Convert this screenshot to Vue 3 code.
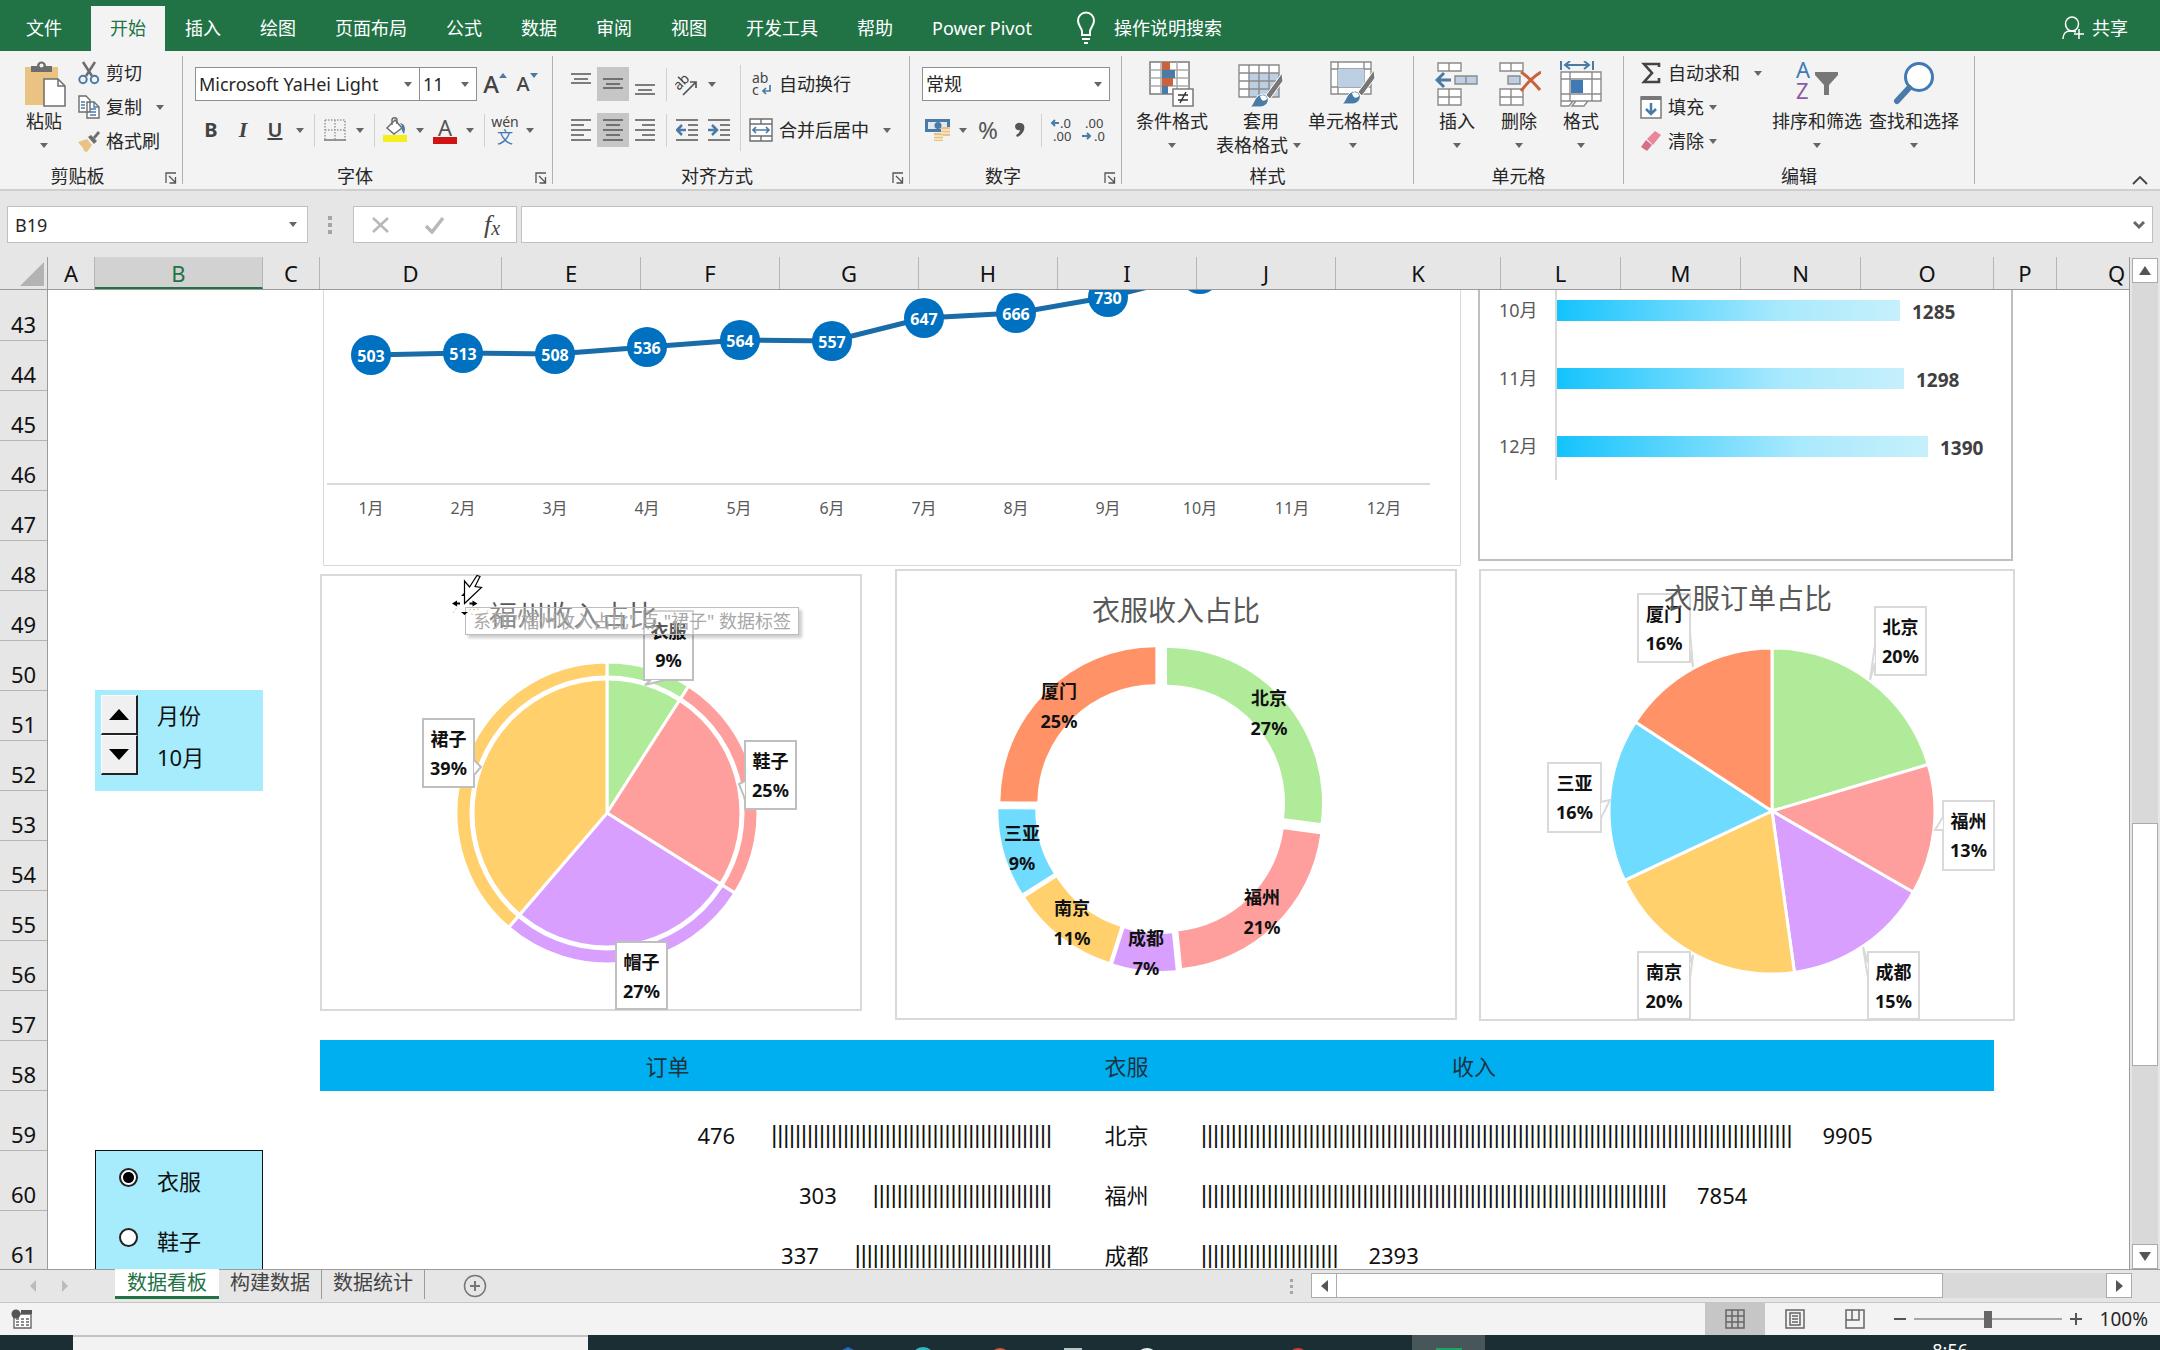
<script setup>
import { ref } from 'vue'

const tabs = ['文件', '开始', '插入', '绘图', '页面布局', '公式', '数据', '审阅', '视图', '开发工具', '帮助', 'Power Pivot']

const columns = [
  { name: 'A', w: 47 }, { name: 'B', w: 168 }, { name: 'C', w: 57 }, { name: 'D', w: 182 },
  { name: 'E', w: 139 }, { name: 'F', w: 139 }, { name: 'G', w: 139 }, { name: 'H', w: 139 },
  { name: 'I', w: 139 }, { name: 'J', w: 139 }, { name: 'K', w: 165 }, { name: 'L', w: 120 },
  { name: 'M', w: 120 }, { name: 'N', w: 120 }, { name: 'O', w: 133 }, { name: 'P', w: 63 },
  { name: 'Q', w: 120 },
]
const rows = Array.from({ length: 19 }, (_, i) => ({ n: 43 + i, h: i === 0 ? 51 : i >= 16 ? 60 : 50 }))

const colors = {
  green: '#afeb99', pink: '#ff9f9d', purple: '#d89fff', yellow: '#ffd06c', blue: '#6fdcff', orange: '#ff9267',
}

/* Monthly orders line */
const line = [
  [371, 355, 503], [463, 353, 513], [555, 354, 508], [647, 347, 536], [740, 340, 564], [832, 341, 557],
  [924, 318, 647], [1016, 313, 666], [1108, 297, 730], [1200, 274, ''],
]
const linePoints = line.map(p => p[0] + ',' + p[1]).join(' ')
const months = Array.from({ length: 12 }, (_, i) => ({ x: 371 + Math.round(i * 92.1), t: i + 1 + '月' }))

const bars = [
  { m: '10月', y: 300, w: 343, v: 1285 },
  { m: '11月', y: 368, w: 347, v: 1298 },
  { m: '12月', y: 436, w: 371, v: 1390 },
]

/* A slice from fraction a to b of a circle, clockwise from the top */
function slice(cx, cy, r, a, b, inner = 0, shift = 0) {
  const at = (f, rad, ox = 0, oy = 0) => {
    const t = f * 2 * Math.PI
    return (ox + rad * Math.sin(t)).toFixed(2) + ' ' + (oy - rad * Math.cos(t)).toFixed(2)
  }
  const mid = (a + b) * Math.PI
  const ox = cx + shift * Math.sin(mid)
  const oy = cy - shift * Math.cos(mid)
  const big = b - a > 0.5 ? 1 : 0
  if (!inner) return `M${ox} ${oy}L${at(a, r, ox, oy)}A${r} ${r} 0 ${big} 1 ${at(b, r, ox, oy)}Z`
  return `M${at(a, r, ox, oy)}A${r} ${r} 0 ${big} 1 ${at(b, r, ox, oy)}L${at(b, inner, ox, oy)}A${inner} ${inner} 0 ${big} 0 ${at(a, inner, ox, oy)}Z`
}

const cityPie = [
  { c: 'green', a: 0, b: 0.091 }, { c: 'pink', a: 0.091, b: 0.339 },
  { c: 'purple', a: 0.339, b: 0.613 }, { c: 'yellow', a: 0.613, b: 1 },
]
const cityLabels = [
  { n: '衣服', p: '9%', x: 644, y: 611, w: 49, h: 69, tip: 'M651 680L645 685L665 680' },
  { n: '鞋子', p: '25%', x: 745, y: 741, w: 51, h: 68, tip: 'M745 781L739 784L745 799' },
  { n: '帽子', p: '27%', x: 616, y: 942, w: 51, h: 67, tip: '' },
  { n: '裙子', p: '39%', x: 423, y: 719, w: 51, h: 68, tip: 'M474 760L481 767L474 775' },
]

const donut = [
  { c: 'green', a: 0, b: 0.271, n: '北京', p: '27%', x: 1269, y: 705 },
  { c: 'pink', a: 0.271, b: 0.484, n: '福州', p: '21%', x: 1262, y: 904 },
  { c: 'purple', a: 0.484, b: 0.549, n: '成都', p: '7%', x: 1146, y: 945 },
  { c: 'yellow', a: 0.549, b: 0.66, n: '南京', p: '11%', x: 1072, y: 915 },
  { c: 'blue', a: 0.66, b: 0.751, n: '三亚', p: '9%', x: 1022, y: 840 },
  { c: 'orange', a: 0.751, b: 1, n: '厦门', p: '25%', x: 1059, y: 698 },
]

const orderPie = [
  { c: 'green', a: 0, b: 0.204 }, { c: 'pink', a: 0.204, b: 0.333 }, { c: 'purple', a: 0.333, b: 0.478 },
  { c: 'yellow', a: 0.478, b: 0.68 }, { c: 'blue', a: 0.68, b: 0.842 }, { c: 'orange', a: 0.842, b: 1 },
]
const orderLabels = [
  { n: '北京', p: '20%', x: 1875, y: 607, w: 51, h: 68, tip: 'M1875 645L1870 680L1875 663' },
  { n: '福州', p: '13%', x: 1943, y: 801, w: 51, h: 69, tip: 'M1943 817L1935 830L1943 830' },
  { n: '成都', p: '15%', x: 1868, y: 952, w: 51, h: 67, tip: 'M1868 963L1863 947L1868 978' },
  { n: '南京', p: '20%', x: 1638, y: 952, w: 52, h: 67, tip: 'M1690 963L1693 955L1690 978' },
  { n: '三亚', p: '16%', x: 1548, y: 763, w: 53, h: 69, tip: 'M1601 802L1610 800L1601 818' },
  { n: '厦门', p: '16%', x: 1638, y: 594, w: 52, h: 68, tip: 'M1690 632L1693 667L1690 650' },
]

const cities = [
  { n: '北京', orders: 476, income: 9905 },
  { n: '福州', orders: 303, income: 7854 },
  { n: '成都', orders: 337, income: 2393 },
]
const product = ref('衣服')
const products = ['衣服', '鞋子']
const sheets = ['数据看板', '构建数据', '数据统计']
const zoom = ref(50)
</script>

<template>
  <div class="app">
    <nav class="tabs">
      <button v-for="(t, i) in tabs" :key="t" class="tab" :class="{ file: i === 0, on: i === 1 }">{{ t }}</button>
      <button class="tell">
        <svg width="20" height="34" viewBox="0 0 20 34" fill="none" stroke="#fff" stroke-width="2"><path d="M6 24v-4C5 16 2 14 2 9.500a8 8 0 0 1 16 0C18 14 15 16 14 20v4zM6 28h8M8 32h4" /></svg>
        操作说明搜索
      </button>
      <button class="share">
        <svg width="22" height="24" viewBox="0 0 22 24" fill="none" stroke="#fff" stroke-width="1.500"><ellipse cx="10" cy="8" rx="6.500" ry="7" /><path d="M1 23c0-5 3-8 7-8 2 0 4 0 6 1M17 13v10M12 18h10" /></svg>
        共享
      </button>
    </nav>

    <section class="ribbon">
      <div class="group clip">
        <div class="body">
          <button class="large w44">
            <svg width="44" height="46" viewBox="0 0 44 46"><path d="M3 6h33v38H3z" fill="#eac282" /><path d="M9 11V5h6c0-6 9-6 9 0h6v6z" fill="#6d6d6d" /><circle cx="19.500" cy="4.500" r="2" fill="#f3f3f3" /><path d="M22 18h14l7 7v20H22z" fill="#fff" stroke="#6d6d6d" stroke-width="1.500" /><path d="M36 18v7h7" fill="none" stroke="#6d6d6d" stroke-width="1.500" /></svg>
            <span>粘贴</span><i class="caret"></i>
          </button>
          <div class="stack">
            <button class="item">
              <svg width="22" height="24" viewBox="0 0 22 24" fill="none" stroke-width="2"><path d="M5 1l9 14M17 1L8 15" stroke="#6d6d6d" stroke-width="2.500" /><circle cx="5" cy="18.500" r="3.700" stroke="#4a7ba6" /><circle cx="16.500" cy="18.500" r="3.700" stroke="#4a7ba6" /></svg>剪切
            </button>
            <button class="item">
              <svg width="22" height="24" viewBox="0 0 22 24" fill="#fff" stroke="#6d6d6d" stroke-width="1.400"><path d="M1 1h7l4 4v12H1zM9 7h7l5 5v11H9z" /><path d="M3 7h4M3 10h4M3 13h4M12 14h6M12 17h6M12 20h6M16 7v5h5" fill="none" stroke="#4a7ba6" /></svg>复制<i class="caret far"></i>
            </button>
            <button class="item">
              <svg width="24" height="24" viewBox="0 0 24 24"><path d="M1 13l9-3 5 6-5 7-3-1-1-3z" fill="#eac282" /><path d="M11 8l3-2 6 6-3 3z" fill="#6d6d6d" /><path d="M16 8l5-6 2 2-5 6z" fill="#6d6d6d" /></svg>格式刷
            </button>
          </div>
        </div>
        <footer>剪贴板<svg class="launch" width="12" height="12" viewBox="0 0 12 12" fill="none" stroke="#555" stroke-width="1.300"><path d="M1 11V1h10M4 4l6 6M10.500 5v6h-6" /></svg></footer>
      </div>

      <div class="group font">
        <div class="body rows">
          <div class="line">
            <label class="combo fontname"><select aria-label="字体"><option>Microsoft YaHei Light</option></select><i class="caret"></i></label>
            <label class="combo fontsize"><select aria-label="字号"><option>11</option></select><i class="caret"></i></label>
            <button class="ib grow" aria-label="增大字号"><b>A</b><svg width="8" height="5"><path d="M0 5h8L4 0z" fill="#4a7ba6" /></svg></button>
            <button class="ib shrink" aria-label="减小字号"><b>A</b><svg width="8" height="5"><path d="M0 0h8L4 5z" fill="#4a7ba6" /></svg></button>
          </div>
          <div class="line">
            <button class="ib bold">B</button><button class="ib italic">I</button><button class="ib under">U</button><i class="caret"></i><i class="sep"></i>
            <button class="ib" aria-label="边框"><svg width="22" height="22" viewBox="0 0 22 22" fill="none" stroke="#999" stroke-width="1.500"><path stroke-dasharray="1.500 1.500" d="M1 1h20v20M1 1v20M11 1v20M1 11h20" /><path d="M0 21h22" stroke="#777" stroke-width="1.500" /></svg></button><i class="caret"></i><i class="sep"></i>
            <button class="ib" aria-label="填充颜色"><svg width="26" height="26" viewBox="0 0 26 26"><path d="M1 18h24v7H1z" fill="#f5ee1e" /><path d="M5 11l8-8 7 8-8 6z" fill="#fff" stroke="#6d6d6d" stroke-width="1.500" /><path d="M10 8V3c0-3 5-3 5 0v4" fill="none" stroke="#6d6d6d" stroke-width="1.500" /><path d="M18 6c5 1 6 5 4 11-2-2-3-6-2-8z" fill="#4a7ba6" /></svg></button><i class="caret"></i>
            <button class="ib fc" aria-label="字体颜色">A<u></u></button><i class="caret"></i><i class="sep"></i>
            <button class="ib wen"><small>wén</small><span>文</span></button><i class="caret"></i>
          </div>
        </div>
        <footer>字体<svg class="launch" width="12" height="12" viewBox="0 0 12 12" fill="none" stroke="#555" stroke-width="1.300"><path d="M1 11V1h10M4 4l6 6M10.500 5v6h-6" /></svg></footer>
      </div>

      <div class="group align">
        <div class="body">
          <div class="rows">
            <div class="line">
              <button class="ib" aria-label="顶端对齐"><svg width="20" height="24" stroke="#555" stroke-width="1.500"><path d="M0 2h20M3 7h14M0 11h20" /></svg></button>
              <button class="ib sel" aria-label="垂直居中"><svg width="20" height="24" stroke="#555" stroke-width="1.500"><path d="M0 7h20M3 12h14M0 16h20" /></svg></button>
              <button class="ib" aria-label="底端对齐"><svg width="20" height="24" stroke="#555" stroke-width="1.500"><path d="M0 13h20M3 18h14M0 22h20" /></svg></button>
              <i class="sep"></i>
              <button class="ib" aria-label="方向"><svg width="24" height="24" viewBox="0 0 24 24"><text x="0" y="14" font-size="14" fill="#444" transform="rotate(-45 8 12)">ab</text><path d="M8 23L21 10M15 10h6v6" fill="none" stroke="#555" stroke-width="1.700" /></svg></button><i class="caret"></i>
            </div>
            <div class="line">
              <button class="ib" aria-label="左对齐"><svg width="20" height="24" stroke="#555" stroke-width="1.500"><path d="M0 2h20M0 7h13M0 12h20M0 17h13M0 22h20" /></svg></button>
              <button class="ib sel" aria-label="居中"><svg width="20" height="24" stroke="#555" stroke-width="1.500"><path d="M0 2h20M3 7h14M0 12h20M3 17h14M0 22h20" /></svg></button>
              <button class="ib" aria-label="右对齐"><svg width="20" height="24" stroke="#555" stroke-width="1.500"><path d="M0 2h20M7 7h13M0 12h20M7 17h13M0 22h20" /></svg></button>
              <i class="sep"></i>
              <button class="ib" aria-label="减少缩进"><svg width="22" height="24" stroke="#555" stroke-width="1.500" fill="none"><path d="M0 2h22M12 7h10M12 12h10M12 17h10M0 22h22" /><path d="M10 12H2M6 7l-5 5 5 5" stroke="#4a7ba6" stroke-width="2.500" /></svg></button>
              <button class="ib" aria-label="增加缩进"><svg width="22" height="24" stroke="#555" stroke-width="1.500" fill="none"><path d="M0 2h22M12 7h10M12 12h10M12 17h10M0 22h22" /><path d="M0 12h8M4 7l5 5-5 5" stroke="#4a7ba6" stroke-width="2.500" /></svg></button>
            </div>
          </div>
          <i class="sep tall"></i>
          <div class="rows">
            <button class="line item2"><span class="ico"><svg width="22" height="28" viewBox="0 0 22 28"><text x="2" y="13" font-size="14" fill="#444">ab</text><text x="2" y="25" font-size="14" fill="#444">c</text><path d="M20 15v6h-7M16 18l-3 3 3 3" fill="none" stroke="#4a7ba6" stroke-width="1.700" /></svg></span>自动换行</button>
            <button class="line item2"><span class="ico"><svg width="24" height="24" viewBox="0 0 24 24" fill="#fff" stroke="#6d6d6d" stroke-width="1.400"><path d="M1 1h22v22H1zM12 1v5M12 18v5M1 6h22M1 18h22" /><path d="M4 12h16M7 9l-3 3 3 3M17 9l3 3-3 3" fill="none" stroke="#4a7ba6" stroke-width="1.700" /></svg></span>合并后居中<i class="caret far"></i></button>
          </div>
        </div>
        <footer>对齐方式<svg class="launch" width="12" height="12" viewBox="0 0 12 12" fill="none" stroke="#555" stroke-width="1.300"><path d="M1 11V1h10M4 4l6 6M10.500 5v6h-6" /></svg></footer>
      </div>

      <div class="group number">
        <div class="body rows">
          <div class="line"><label class="combo numfmt"><select aria-label="数字格式"><option>常规</option></select><i class="caret"></i></label></div>
          <div class="line">
            <button class="ib" aria-label="会计数字格式"><svg width="26" height="24" viewBox="0 0 26 24"><path d="M0 1h25v13H0z" fill="#4a7ba6" /><path d="M3 4h19v7H3z" fill="#dfe9f2" /><circle cx="13" cy="7.500" r="3.500" fill="#4a7ba6" /><path d="M16 9h9v9h-9zM9 15h9v8H9z" fill="#eac282" /><path d="M16 12h9M16 15h9M9 18h9M9 21h9" stroke="#fff" /></svg></button><i class="caret"></i>
            <button class="ib pct">%</button>
            <button class="ib" aria-label="千位分隔"><svg width="12" height="16"><path d="M1 4a4 4 0 0 1 5-3c4 0 5 3 4 7-1 3-4 6-7 7l-1-2c2-1 4-3 4-5-3 1-5-1-5-4z" fill="#555" /></svg></button>
            <i class="sep"></i>
            <button class="ib" aria-label="增加小数位数"><svg width="24" height="28" viewBox="0 0 24 28"><text x="10" y="12" font-size="13" fill="#444">.0</text><text x="3" y="25" font-size="13" fill="#444">.00</text><path d="M9 7H2M5 4L2 7l3 3" fill="none" stroke="#4a7ba6" stroke-width="2" /></svg></button>
            <button class="ib" aria-label="减少小数位数"><svg width="24" height="28" viewBox="0 0 24 28"><text x="3" y="12" font-size="13" fill="#444">.00</text><text x="12" y="25" font-size="13" fill="#444">.0</text><path d="M0 20h8M5 17l3 3-3 3" fill="none" stroke="#4a7ba6" stroke-width="2" /></svg></button>
          </div>
        </div>
        <footer>数字<svg class="launch" width="12" height="12" viewBox="0 0 12 12" fill="none" stroke="#555" stroke-width="1.300"><path d="M1 11V1h10M4 4l6 6M10.500 5v6h-6" /></svg></footer>
      </div>

      <div class="group styles">
        <div class="body">
          <button class="large">
            <svg width="46" height="46" viewBox="0 0 46 46"><path d="M1 1h39v32H1z" fill="#fff" stroke="#7a7a7a" stroke-width="1.500" /><path d="M1 9h39M1 17h39M1 25h39M12 1v32M28 1v32" stroke="#aaa" stroke-width="1.500" /><path d="M13 1h8v8h-8zM13 17h11v8H13z" fill="#c8623f" /><path d="M13 9h13v8H13zM13 25h6v8h-6z" fill="#4a7ba6" /><path d="M24 28h20v17H24z" fill="#fff" stroke="#7a7a7a" stroke-width="1.500" /><path d="M29 34h10M29 39h10M37 31l-6 11" stroke="#333" stroke-width="1.500" /></svg>
            <span>条件格式</span><i class="caret"></i>
          </button>
          <button class="large tbl">
            <svg width="46" height="46" viewBox="0 0 46 46"><path d="M1 4h40v32H1z" fill="#fff" /><path d="M11 12h30v24H11z" fill="#bdd0e3" /><path d="M1 4h40v32H1zM1 12h40M1 20h40M1 28h40M11 4v32M21 4v32M31 4v32" fill="none" stroke="#8a8a8a" stroke-width="1.400" /><path d="M44 12L28 34l4 4L45 20z" fill="#777" stroke="#fff" /><path d="M12 46c4-2 4-13 14-13 7 3 5 12-3 13z" fill="#4a7ba6" stroke="#fff" /><path d="M22 35c3-2 7 0 7 3-3 3-6 2-7-3z" fill="#fff" /></svg>
            <span>套用</span><span class="inline">表格格式<i class="caret"></i></span>
          </button>
          <button class="large">
            <svg width="46" height="46" viewBox="0 0 46 46"><path d="M1 1h40v32H1z" fill="#fff" stroke="#8a8a8a" stroke-width="1.400" /><path d="M8 1v32M34 1v32M1 8h40M1 26h40" stroke="#8a8a8a" stroke-width="1.400" /><path d="M8 8h26v18H8z" fill="#bdd0e3" /><path d="M44 9L28 31l4 4L45 17z" fill="#777" stroke="#fff" /><path d="M12 43c4-2 4-13 14-13 7 3 5 12-3 13z" fill="#4a7ba6" stroke="#fff" /><path d="M22 32c3-2 7 0 7 3-3 3-6 2-7-3z" fill="#fff" /></svg>
            <span>单元格样式</span><i class="caret"></i>
          </button>
        </div>
        <footer>样式</footer>
      </div>

      <div class="group cells">
        <div class="body">
          <button class="large w44">
            <svg width="44" height="46" viewBox="0 0 44 46" stroke="#8a8a8a" stroke-width="1.400" fill="#fff"><path d="M3 2h23v8H3zM14 2v8M3 28h23v16H3zM14 28v16M3 36h23" /><path d="M20 15h22v8H20zM31 15v8" fill="#bdd0e3" /><path d="M16 19H2M9 12l-7 7 7 7" fill="none" stroke="#4a7ba6" stroke-width="3" /></svg>
            <span>插入</span><i class="caret"></i>
          </button>
          <button class="large w44">
            <svg width="44" height="46" viewBox="0 0 44 46" stroke="#8a8a8a" stroke-width="1.400" fill="#fff"><path d="M3 2h23v8H3zM14 2v8M3 28h23v16H3zM14 28v16M3 36h23" /><path d="M11 15h12v8H11z" fill="#bdd0e3" /><path d="M24 11c6 4 13 11 19 18M44 11C36 16 30 22 24 30" fill="none" stroke="#c8623f" stroke-width="3" /></svg>
            <span>删除</span><i class="caret"></i>
          </button>
          <button class="large w44">
            <svg width="44" height="46" viewBox="0 0 44 46" stroke="#8a8a8a" stroke-width="1.400" fill="#fff"><path d="M2 11h40v29H2zM11 11v29M33 11v29M2 18h40M2 33h40M2 40h12l-4 5H2zM17 40h12l-4 5H13z" /><path d="M12 19h12v13H12z" fill="#3f7ab5" stroke="none" /><path d="M2 0v9M34 0v9M6 4h24M11 0L6 4l5 4M25 0l5 4-5 4" fill="none" stroke="#4a7ba6" stroke-width="2" /></svg>
            <span>格式</span><i class="caret"></i>
          </button>
        </div>
        <footer>单元格</footer>
      </div>

      <div class="group edit">
        <div class="body">
          <div class="stack">
            <button class="item"><svg width="22" height="24" viewBox="0 0 22 24"><path d="M19 6V3H4l8 9-8 9h15v-4" fill="none" stroke="#444" stroke-width="2.600" /></svg>自动求和<i class="caret far"></i></button>
            <button class="item"><svg width="24" height="24" viewBox="0 0 24 24"><path d="M2 2h20v21H2z" fill="#fff" stroke="#7a7a7a" stroke-width="1.500" /><path d="M2 1h20v4H2z" fill="#777" /><path d="M12 8v11M7 14l5 5 5-5" fill="none" stroke="#4a7ba6" stroke-width="2.500" /></svg>填充<i class="caret"></i></button>
            <button class="item"><svg width="24" height="24" viewBox="0 0 24 24"><path d="M8 10l8-8 6 4-8 10z" fill="#e8879a" /><path d="M7 11l6 5-5 6-6-4z" fill="#d56f86" /></svg>清除<i class="caret"></i></button>
          </div>
          <button class="large">
            <svg width="46" height="46" viewBox="0 0 46 46"><text x="2" y="17" font-size="22" fill="#3f7ab5">A</text><text x="2" y="38" font-size="22" fill="#9159a5">Z</text><path d="M21 11h23v3l-9 10v10h-5V24l-9-10z" fill="#777" /></svg>
            <span>排序和筛选</span><i class="caret"></i>
          </button>
          <button class="large">
            <svg width="46" height="46" viewBox="0 0 46 46"><circle cx="28" cy="16" r="13.500" fill="#fff" stroke="#3f7ab5" stroke-width="3" /><path d="M18 27L6 40" stroke="#4a7ba6" stroke-width="6" stroke-linecap="round" /></svg>
            <span>查找和选择</span><i class="caret"></i>
          </button>
        </div>
        <footer>编辑</footer>
      </div>
      <button class="collapse" aria-label="折叠功能区"><svg width="16" height="10" fill="none" stroke="#444" stroke-width="1.800"><path d="M1 9l7-7 7 7" /></svg></button>
    </section>

    <section class="fbar">
      <label class="namebox"><input value="B19" aria-label="名称框" /><i class="caret"></i></label>
      <svg width="5" height="20" fill="#a5a5a5"><path d="M0 0h4v4H0zM0 7h4v4H0zM0 14h4v4H0z" /></svg>
      <div class="fx">
        <button aria-label="取消"><svg width="18" height="18" stroke="#b8b8b8" stroke-width="2.500"><path d="M1 2l15 14M16 2L1 16" /></svg></button>
        <button aria-label="输入"><svg width="20" height="18" fill="none" stroke="#b8b8b8" stroke-width="3.500"><path d="M1 10l6 6L18 2" /></svg></button>
        <button class="fn">f<sub>x</sub></button>
      </div>
      <label class="formula"><input aria-label="编辑栏" /><svg width="12" height="10" fill="none" stroke="#666" stroke-width="3"><path d="M1 2l5 5 5-5" /></svg></label>
    </section>

    <main class="work">
      <div class="sheet">
        <div class="colhead">
          <div class="corner"><svg width="24" height="24"><path d="M24 0v24H0z" fill="#b3b3b3" /></svg></div>
          <div v-for="c in columns" :key="c.name" class="col" :class="{ on: c.name === 'B' }" :style="{ width: c.w + 'px' }">{{ c.name }}</div>
        </div>
        <div class="pane">
          <div class="rowhead">
            <div v-for="r in rows" :key="r.n" class="row" :style="{ height: r.h + 'px' }">{{ r.n }}</div>
          </div>
          <div class="board">
            <aside class="rail">
              <div class="month">
                <div class="spin">
                  <button aria-label="增加"><svg width="20" height="11"><path d="M0 11h20L10 0z" /></svg></button>
                  <button aria-label="减少"><svg width="20" height="11"><path d="M0 0h20L10 11z" /></svg></button>
                </div>
                <div class="mtext"><span>月份</span><span>10月</span></div>
              </div>
              <div class="radios">
                <label v-for="p in products" :key="p"><input v-model="product" type="radio" name="product" :value="p" />{{ p }}</label>
              </div>
            </aside>

            <div class="charts">
              <div class="chartrow top">
                <svg class="c-line" width="1139" height="276" viewBox="322 290 1139 276">
                  <path d="M323.500 280v285.500h1137V280" fill="none" stroke="#d9d9d9" />
                  <path d="M327 484h1103" stroke="#d9d9d9" stroke-width="2" />
                  <polyline :points="linePoints + ' 1292,250'" fill="none" stroke="#1a6ca8" stroke-width="5" />
                  <g v-for="p in line" :key="p[0]">
                    <circle :cx="p[0]" :cy="p[1]" r="20" fill="#0070c0" />
                    <text :x="p[0]" :y="p[1] + 7" class="pt">{{ p[2] }}</text>
                  </g>
                  <text v-for="m in months" :key="m.t" :x="m.x" y="514" class="mo">{{ m.t }}</text>
                </svg>
                <svg class="c-bar" width="535" height="272" viewBox="1478 290 535 272">
                  <defs><linearGradient id="sky"><stop offset="0" stop-color="#14c3fd" /><stop offset=".65" stop-color="#a9e9fd" /><stop offset="1" stop-color="#c6f0fb" /></linearGradient></defs>
                  <path d="M1479 280v280h533V280" fill="none" stroke="#bfbfbf" stroke-width="2" />
                  <path d="M1556 290v190" stroke="#d9d9d9" stroke-width="2" />
                  <g v-for="b in bars" :key="b.m">
                    <text x="1499" :y="b.y + 17" class="bm">{{ b.m }}</text>
                    <rect x="1557" :y="b.y" :width="b.w" height="21" fill="url(#sky)" />
                    <text :x="1557 + b.w + 12" :y="b.y + 19" class="bv">{{ b.v }}</text>
                  </g>
                </svg>
              </div>

              <div class="chartrow pies">
                <div class="c-city">
                  <svg width="542" height="437" viewBox="320 574 542 437">
                    <rect x="321" y="575" width="540" height="435" fill="#fff" stroke="#d9d9d9" stroke-width="2" />
                    <path v-for="s in cityPie" :key="s.c" :d="slice(607, 813, 151, s.a, s.b)" :fill="colors[s.c]" stroke="#fff" stroke-width="3" />
                    <circle cx="607" cy="813" r="135" fill="none" stroke="#fff" stroke-width="5" />
                    <g v-for="l in cityLabels" :key="l.n">
                      <rect :x="l.x" :y="l.y" :width="l.w" :height="l.h" fill="#fff" stroke="#bfbfbf" stroke-width="2" />
                      <path v-if="l.tip" :d="l.tip" fill="#fff" stroke="#bfbfbf" stroke-width="2" />
                      <text :x="l.x + l.w / 2" :y="l.y + 27" class="lab">{{ l.n }}</text>
                      <text :x="l.x + l.w / 2" :y="l.y + 56" class="lab">{{ l.p }}</text>
                    </g>
                    <text x="573" y="626" class="title">福州收入占比</text>
                  </svg>
                  <div class="tip">系列 "福州收入占比" 点 "裙子" 数据标签</div>
                  <svg class="cursor" width="44" height="46" viewBox="0 0 44 46"><path d="M13.500 29.500V7l5 6L26 1.500l3 1-5 10 6.500 1z" fill="#fff" stroke="#000" stroke-width="1.200" /><path d="M1 29.500l5-3v2h3v2H6v2zM26.500 29.500l-5-3v2h-3v2h3v2zM13 19v3h-3zM10 38h7l-3.500 3z" /><path d="M2 39l5-7M18 36l10-1M34 41l5-8M20 40l12 2" fill="none" stroke="#d8c79a" stroke-dasharray="2 2" /></svg>
                </div>

                <svg class="c-donut" width="562" height="451" viewBox="895 569 562 451">
                  <rect x="896" y="570" width="560" height="449" fill="#fff" stroke="#d9d9d9" stroke-width="2" />
                  <path v-for="s in donut" :key="s.c" :d="slice(1161, 808, 155, s.a, s.b, 118, 8)" :fill="colors[s.c]" />
                  <g v-for="s in donut" :key="s.n">
                    <text :x="s.x" :y="s.y" class="lab">{{ s.n }}</text>
                    <text :x="s.x" :y="s.y + 30" class="lab">{{ s.p }}</text>
                  </g>
                  <text x="1176" y="621" class="title">衣服收入占比</text>
                </svg>

                <svg class="c-order" width="536" height="452" viewBox="1479 569 536 452">
                  <rect x="1480" y="570" width="534" height="450" fill="#fff" stroke="#d9d9d9" stroke-width="2" />
                  <path v-for="s in orderPie" :key="s.c" :d="slice(1772, 811, 163, s.a, s.b)" :fill="colors[s.c]" stroke="#fff" stroke-width="3" />
                  <g v-for="l in orderLabels" :key="l.n">
                    <rect :x="l.x" :y="l.y" :width="l.w" :height="l.h" fill="#fff" stroke="#d9d9d9" stroke-width="2" />
                    <path :d="l.tip" fill="#fff" stroke="#d9d9d9" stroke-width="2" />
                    <text :x="l.x + l.w / 2" :y="l.y + 27" class="lab">{{ l.n }}</text>
                    <text :x="l.x + l.w / 2" :y="l.y + 56" class="lab">{{ l.p }}</text>
                  </g>
                  <text x="1748" y="609" class="title">衣服订单占比</text>
                </svg>
              </div>

              <table class="data">
                <colgroup><col class="k1" /><col class="k2" /><col class="k3" /></colgroup>
                <thead><tr><th class="h1">订单</th><th>衣服</th><th class="h3">收入</th></tr></thead>
                <tbody>
                  <tr v-for="c in cities" :key="c.n">
                    <td class="orders"><div><span>{{ c.orders }}</span><span class="ticks">{{ '|'.repeat(Math.floor(c.orders / 10)) }}</span></div></td>
                    <td class="city">{{ c.n }}</td>
                    <td class="income"><div><span class="ticks">{{ '|'.repeat(Math.floor(c.income / 100)) }}</span><span>{{ c.income }}</span></div></td>
                  </tr>
                </tbody>
              </table>
            </div>
          </div>
        </div>
      </div>
      <div class="vscroll">
        <button aria-label="向上"><svg width="12" height="9"><path d="M0 9h12L6 0z" fill="#555" /></svg></button>
        <div class="vtrack"><div class="vthumb"></div></div>
        <button aria-label="向下"><svg width="12" height="9"><path d="M0 0h12L6 9z" fill="#555" /></svg></button>
      </div>
    </main>

    <section class="sheetbar">
      <div class="arrows">
        <svg width="6" height="12"><path d="M6 0v12L0 6z" fill="#bbb" /></svg>
        <svg width="6" height="12"><path d="M0 0v12l6-6z" fill="#bbb" /></svg>
      </div>
      <button v-for="(s, i) in sheets" :key="s" class="stab" :class="{ on: i === 0 }">{{ s }}</button>
      <button class="plus" aria-label="新工作表"><svg width="24" height="24" fill="none" stroke="#777" stroke-width="1.500"><circle cx="12" cy="12" r="10.500" /><path d="M12 7v10M7 12h10" stroke-width="2" /></svg></button>
      <svg class="grip" width="4" height="16" fill="#a5a5a5"><path d="M0 0h3v3H0zM0 6h3v3H0zM0 12h3v3H0z" /></svg>
      <div class="hscroll">
        <button aria-label="向左"><svg width="7" height="12"><path d="M7 0v12L0 6z" fill="#555" /></svg></button>
        <div class="hthumb"></div>
        <button aria-label="向右"><svg width="7" height="12"><path d="M0 0v12l7-6z" fill="#555" /></svg></button>
      </div>
    </section>

    <section class="status">
      <svg width="22" height="20" viewBox="0 0 22 20"><path d="M3 5h17v14H3z" fill="#fff" stroke="#666" stroke-width="1.400" /><path d="M10 1h11v4H10z" fill="#555" /><circle cx="5" cy="5" r="4.500" fill="#555" /><path d="M5 10h3M10 10h3M15 10h3M5 13h3M10 13h3M15 13h3M5 16h3M10 16h3M15 16h3" stroke="#666" stroke-width="1.500" /></svg>
      <div class="views">
        <button class="on" aria-label="普通"><svg width="20" height="20" fill="none" stroke="#666" stroke-width="1.500"><path d="M1 1h18v18H1zM7 1v18M13 1v18M1 7h18M1 13h18" /></svg></button>
        <button aria-label="页面布局"><svg width="20" height="20" fill="none" stroke="#666" stroke-width="1.500"><path d="M1 1h18v18H1zM5 4h10v12H5zM7 7h6M7 10h6M7 13h6" /></svg></button>
        <button aria-label="分页预览"><svg width="20" height="20" fill="none" stroke="#666" stroke-width="1.500"><path d="M1 1h18v18H1zM1 11h13V1M7 1v10" /></svg></button>
      </div>
      <button class="zb" aria-label="缩小"><svg width="12" height="12" stroke="#555" stroke-width="2"><path d="M0 6h12" /></svg></button>
      <input v-model="zoom" class="zoom" type="range" min="0" max="100" aria-label="缩放" />
      <button class="zb" aria-label="放大"><svg width="12" height="12" stroke="#555" stroke-width="2"><path d="M0 6h12M6 0v12" /></svg></button>
      <span class="zp">100%</span>
    </section>

    <footer class="taskbar">
      <div class="search"></div>
      <svg class="apps" width="800" height="15" viewBox="588 0 800 15">
        <path d="M842 15l6-3 6 3z" fill="#1c6fc4" /><circle cx="923" cy="24" r="12" fill="#2fb9bd" /><circle cx="1000" cy="23" r="10" fill="#cf5a3a" /><path d="M1064 15v-2h18v2z" fill="#b9c4c8" /><circle cx="1147" cy="24" r="11" fill="#e8eef0" /><circle cx="1298" cy="23" r="10" fill="#d33b36" />
      </svg>
      <div class="active"><svg width="26" height="3"><path d="M0 1h26v2H0z" fill="#21a366" /></svg></div>
      <span class="clock">8:56</span>
    </footer>
  </div>
</template>

<style>
body { margin: 0; overflow: hidden; }
</style>

<style scoped>
.app, .app * { box-sizing: border-box; }
.app { height: 100vh; display: flex; flex-direction: column; background: #e6e6e6; color: #262626; font: 18px/24px "Noto Sans", "Noto Sans CJK SC", sans-serif; overflow: hidden; }
button, input, select { font: inherit; color: inherit; background: none; border: 0; padding: 0; margin: 0; }
button { white-space: nowrap; }
input:focus { outline: none; }
svg { display: block; flex: none; }
svg text { font-family: "Noto Sans", "Noto Sans CJK SC", sans-serif; }

.tabs { flex: none; height: 51px; padding-top: 6px; background: #217346; color: #fff; display: flex; gap: 1px; }
.tab { padding: 0 19px 2px; }
.tab.file { padding: 0 28px 2px 26px; }
.tab.on { background: #f3f3f3; color: #217346; }
.tell, .share { display: flex; align-items: center; gap: 18px; padding-bottom: 2px; }
.tell { margin-left: 24px; }
.share { margin-left: auto; margin-right: 32px; gap: 8px; }

.ribbon { flex: none; height: 140px; padding-top: 5px; background: #f3f3f3; border-bottom: 2px solid #cfcfcf; display: flex; align-items: flex-start; }
.group { flex: none; height: 128px; border-right: 1px solid #b1b1b1; display: flex; flex-direction: column; }
.body { height: 110px; display: flex; align-items: flex-start; }
.rows { display: flex; flex-direction: column; gap: 12px; padding-top: 11px; }
.line { display: flex; align-items: center; height: 34px; }
.group > footer { position: relative; height: 18px; line-height: 20px; text-align: center; }
.launch { position: absolute; right: 5px; bottom: 0; }
.clip { width: 183px; } .clip .body { padding-left: 22px; gap: 10px; } .clip > footer { padding-right: 27px; }
.font { width: 370px; } .font .body, .align .body, .number .body { padding-left: 12px; }
.font > footer { padding-right: 25px; }
.align { width: 357px; } .align > footer { padding-right: 28px; }
.number { width: 212px; } .number > footer { padding-right: 25px; }
.styles { width: 292px; } .styles .body { padding-left: 14px; gap: 2px; } .styles .large:first-child { margin-right: 6px; }
.cells { width: 210px; } .cells .body { padding-left: 21px; gap: 18px; }
.edit { width: 351px; } .edit .body { padding-left: 14px; gap: 7px; } .edit .stack { width: 127px; }
.large { display: flex; flex-direction: column; align-items: center; padding-top: 5px; min-width: 44px; }
.large > svg { margin-bottom: 2px; }
.large > .caret { height: 24px; }
.inline { display: flex; }
.inline .caret { height: 24px; }
.w44 { width: 44px; }
.stack { display: flex; flex-direction: column; }
.item { height: 34px; display: flex; align-items: center; }
.item svg { width: 26px; margin-right: 4px; }
.ico { width: 34px; display: flex; justify-content: center; padding-right: 2px; }
.caret { flex: none; width: 18px; height: 18px; display: flex; align-items: center; justify-content: center; }
.caret::before { content: ""; border: 4px solid transparent; border-top: 5px solid #666; border-bottom: 0; }
.caret.far { margin-left: 9px; }
.sep { flex: none; width: 10px; height: 33px; background: linear-gradient(#d0d0d0, #d0d0d0) center / 1px 100% no-repeat; }
.sep.tall { height: 86px; margin-top: 9px; }
.ib { flex: none; width: 32px; height: 34px; display: flex; align-items: center; justify-content: center; color: #444; }
.ib.sel { background: #c6c6c6; }
.bold { font-weight: 700; font-size: 20px; }
.italic { font-family: "Liberation Serif", serif; font-style: italic; font-weight: 700; font-size: 22px; }
.under { text-decoration: underline; font-size: 20px; font-weight: 600; }
.pct { font-size: 24px; color: #555; }
.grow, .shrink { align-items: flex-start; }
.grow b, .shrink b { font-weight: 500; line-height: 34px; font-size: 24px; }
.shrink b { font-size: 20px; }
.grow svg, .shrink svg { margin-top: 6px; }
.fc { flex-direction: column; font-size: 22px; line-height: 20px; color: #555; }
.fc u { width: 24px; height: 7px; background: #d01414; }
.wen { flex-direction: column; }
.wen small { font-size: 14px; line-height: 14px; }
.wen span { font-size: 16px; line-height: 16px; color: #3f7ab5; }
.combo { position: relative; height: 34px; background: #fff; border: 1px solid #8f8f8f; display: flex; align-items: center; }
.combo select { appearance: none; width: 100%; height: 32px; padding-left: 3px; outline: 0; }
.combo .caret { position: absolute; right: 2px; top: 7px; }
.fontname { width: 225px; } .fontsize { width: 58px; margin-left: -1px; margin-right: 2px; } .numfmt { width: 188px; }
.collapse { margin-left: auto; margin-right: 12px; align-self: flex-end; padding-bottom: 4px; }

.fbar { flex: none; height: 66px; padding: 15px 7px 0; display: flex; align-items: flex-start; }
.fbar > svg { margin: 10px 20px 0; }
.namebox, .formula, .fx { height: 37px; background: #fff; border: 1px solid #c0c0c0; display: flex; align-items: center; }
.namebox { width: 301px; padding: 0 5px 0 7px; }
.namebox input { flex: 1; min-width: 0; }
.fx { width: 164px; padding: 0 12px 0 18px; justify-content: space-between; margin-right: 4px; }
.fn { font: italic 400 26px/30px "Liberation Serif", serif; color: #444; width: 24px; }
.fn sub { font-size: 20px; line-height: 10px; vertical-align: -2px; }
.formula { flex: 1; padding-right: 7px; }
.formula input { flex: 1; height: 30px; padding-left: 8px; }

.work { flex: 1; min-height: 0; display: flex; }
.sheet { flex: 1; min-width: 0; display: flex; flex-direction: column; border-right: 1px solid #9b9b9b; background: #fff; }
.colhead { flex: none; height: 33px; display: flex; background: #e6e6e6; border-bottom: 1px solid #9b9b9b; overflow: hidden; }
.corner { flex: none; width: 48px; padding: 5px 4px 0 20px; border-right: 1px solid #9b9b9b; }
.col { flex: none; border-right: 1px solid #b5b5b5; text-align: center; font-size: 22px; line-height: 32px; color: #111; }
.col.on { background: #d2d2d2; color: #217346; border-bottom: 2px solid #217346; }
.pane { flex: 1; min-height: 0; display: flex; overflow: hidden; }
.rowhead { flex: none; width: 48px; background: #e6e6e6; border-right: 1px solid #9b9b9b; overflow: hidden; }
.row { display: flex; align-items: flex-end; justify-content: center; border-bottom: 1px solid #b5b5b5; font-size: 22px; line-height: 32px; color: #111; }
.board { flex: none; display: flex; padding-left: 47px; gap: 57px; }

.rail { width: 168px; padding-top: 400px; display: flex; flex-direction: column; gap: 359px; font-size: 22px; color: #111; }
.month { flex: none; height: 101px; background: #a6ecfc; padding: 5px 0 0 6px; display: flex; gap: 19px; }
.spin { width: 37px; }
.spin button { display: flex; align-items: center; justify-content: center; width: 37px; height: 40px; background: #f0f0f0; border: 1px solid #fff; border-right: 2px solid #222; border-bottom: 2px solid #222; }
.mtext { display: flex; flex-direction: column; gap: 10px; line-height: 32px; padding-top: 4px; }
.radios { flex: none; height: 180px; background: #a6ecfc; border: 1px solid #111; padding-left: 23px; }
.radios label { display: flex; align-items: center; gap: 19px; height: 60px; }
.radios input { appearance: none; width: 19px; height: 19px; margin-top: -8px; border: 2px solid #222; border-radius: 50%; background: #fff; }
.radios input:checked { background: radial-gradient(#000 5px, #fff 6px); }

.charts { display: flex; flex-direction: column; }
.chartrow { display: flex; align-items: flex-start; }
.top { padding-left: 2px; gap: 17px; margin-bottom: 3px; }
.pies { margin-bottom: 19px; }
.c-city { position: relative; margin: 5px 33px 0 0; }
.c-donut { margin-right: 22px; }
.pt { font-size: 16px; font-weight: 700; fill: #fff; text-anchor: middle; }
.mo { font-size: 16px; fill: #595959; text-anchor: middle; }
.bm { font-size: 18px; fill: #595959; }
.bv { font-size: 19px; font-weight: 700; fill: #404040; }
.lab { font-size: 18px; font-weight: 700; fill: #111; text-anchor: middle; }
.title { font-size: 28px; fill: #595959; text-anchor: middle; }
.tip { position: absolute; left: 145px; top: 33px; height: 28px; padding: 0 7px; line-height: 26px; white-space: nowrap; color: #a8a8a8; background: rgba(255, 255, 255, .3); border: 1px solid #bdbdbd; box-shadow: 3px 3px 3px rgba(0, 0, 0, .2); }
.cursor { position: absolute; left: 131px; top: 0; }

.data { width: 1674px; table-layout: fixed; border-collapse: collapse; font-size: 22px; line-height: 32px; color: #111; }
.k1 { width: 737px; } .k2 { width: 139px; } .k3 { width: 798px; }
.data th { height: 51px; padding: 0; background: #00aff0; color: #1d3340; font-weight: 400; }
.data .h1 { padding-right: 42px; } .data .h3 { padding-right: 242px; }
.data td { height: 60px; padding: 0; vertical-align: bottom; }
.data td > div { display: flex; align-items: center; }
.orders > div { justify-content: flex-end; gap: 36px; padding-right: 5px; }
.income > div { gap: 30px; padding-left: 5px; }
.city { text-align: center; }
.ticks { font: 23px/32px "Liberation Sans", sans-serif; white-space: nowrap; }

.vscroll { flex: none; width: 30px; display: flex; flex-direction: column; align-items: center; padding-top: 1px; }
.vscroll button, .hscroll button { flex: none; display: flex; align-items: center; justify-content: center; width: 26px; height: 25px; background: #fff; border: 1px solid #ababab; }
.vtrack { flex: 1; width: 26px; background: #d9d9d9; padding-top: 540px; }
.vthumb { height: 243px; background: #fff; border: 1px solid #ababab; }

.sheetbar { flex: none; height: 34px; display: flex; align-items: flex-start; border-top: 1px solid #9b9b9b; border-bottom: 1px solid #c6c6c6; font-size: 20px; }
.arrows { width: 115px; display: flex; gap: 26px; padding: 10px 0 0 30px; }
.stab { height: 29px; padding: 0 11px; line-height: 24px; padding-bottom: 4px; color: #444; border-right: 1px solid #9b9b9b; }
.stab.on { padding: 0 12px; background: #fff; color: #217346; border-right: 0; border-bottom: 3px solid #217346; margin-top: -1px; height: 30px; }
.plus { margin: 4px 0 0 38px; }
.grip { margin: 9px 17px 0 auto; }
.hscroll { width: 38%; margin: 3px 28px 0 0; display: flex; background: #d9d9d9; }
.hthumb { width: 606px; margin-right: auto; background: #fff; border: 1px solid #ababab; border-left: 0; }

.status { flex: none; height: 32px; background: #f3f3f3; display: flex; align-items: center; padding: 0 12px 0 11px; }
.views { margin-left: auto; margin-right: 1px; display: flex; align-self: stretch; }
.views button { width: 60px; display: flex; align-items: center; justify-content: center; }
.views .on { background: #c6c6c6; }
.zb { margin: 0 8px; }
.zoom { appearance: none; width: 148px; height: 18px; background: linear-gradient(#a6a6a6, #a6a6a6) center / 100% 2px no-repeat; }
.zoom::-webkit-slider-thumb { appearance: none; width: 8px; height: 17px; background: #666; }
.zp { font-size: 19px; margin-left: 10px; }

.taskbar { flex: none; height: 15px; background: #1b2e33; display: flex; overflow: hidden; padding-left: 73px; }
.search { flex: none; width: 515px; background: #f2f2f2; border-top: 2px solid #c4c4c4; }
.active { width: 73px; margin-left: 24px; background: #465659; display: flex; align-items: flex-end; justify-content: center; }
.clock { margin-left: auto; margin-right: 192px; color: #fff; padding-top: 3px; }
</style>
